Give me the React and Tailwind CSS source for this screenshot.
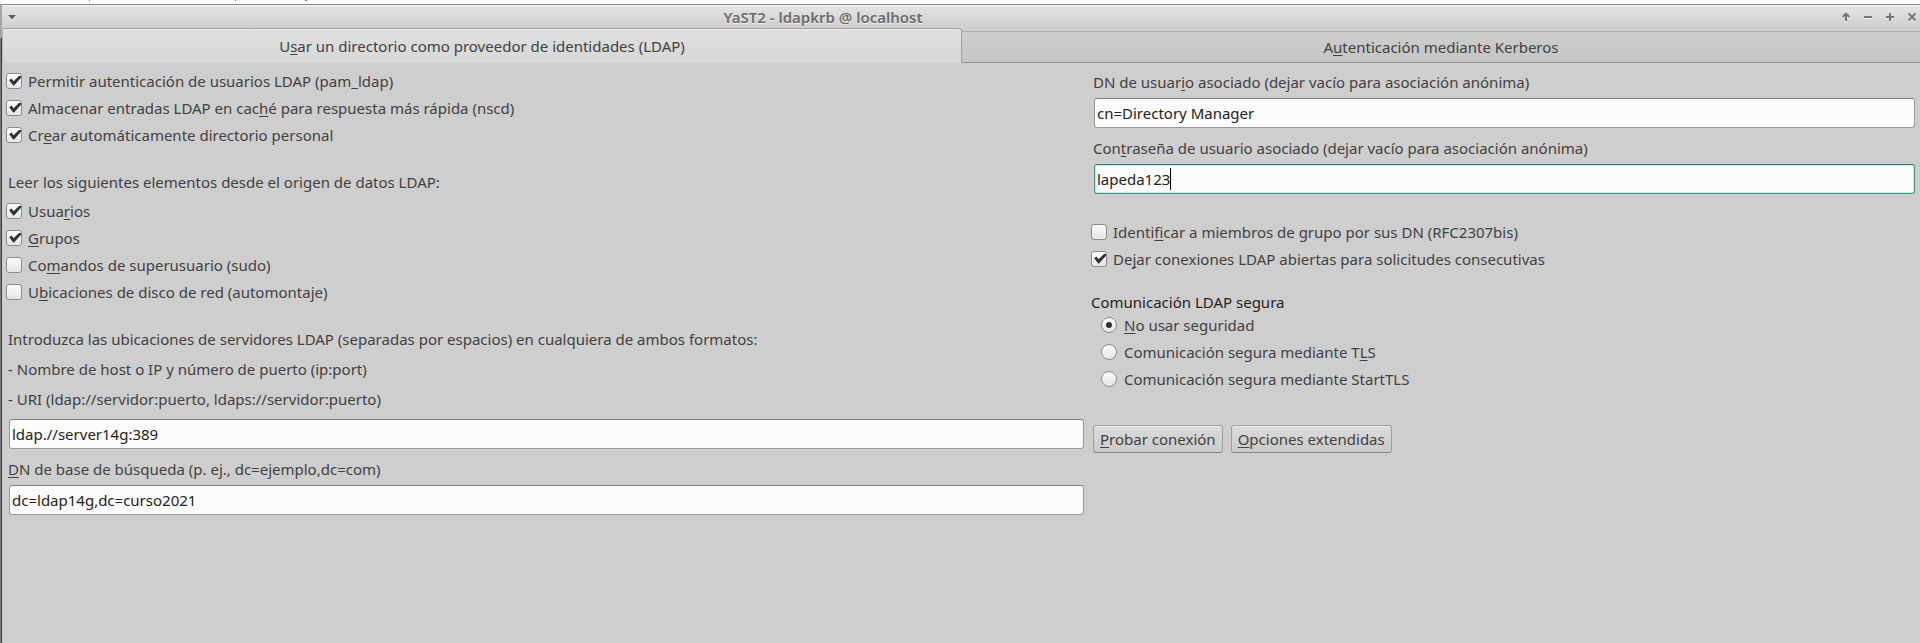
import { useState } from "react";

/* Label text with its keyboard accelerator: the letter after "&" is underlined. */
function Mnemonic({ text }) {
  const at = text.indexOf("&");
  if (at < 0) return <span>{text}</span>;
  return (
    <span>
      {text.slice(0, at)}
      <u className="underline decoration-1 underline-offset-2 [text-decoration-skip-ink:none]">{text[at + 1]}</u>
      {text.slice(at + 2)}
    </span>
  );
}

function Check({ text, checked = false }) {
  const [on, setOn] = useState(checked);
  return (
    <label className="flex h-[27px] items-center gap-[6px]">
      <span className="grid size-4 shrink-0">
        <input
          type="checkbox"
          checked={on}
          onChange={() => setOn(!on)}
          className="col-start-1 row-start-1 size-4 appearance-none rounded-[3px] border border-[#8d8d88] bg-linear-to-b from-[#fbfbfb] to-[#e6e6e4]"
        />
        {on && (
          <svg viewBox="0 0 16 16" className="pointer-events-none col-start-1 row-start-1 size-4" fill="#2b3336">
            <path d="M3.2 7.2 5.4 5.6 7.6 8.2 13 3 15 3 15 4.8 8 12.4 7.2 12.4Z" />
          </svg>
        )}
      </span>
      <Mnemonic text={text} />
    </label>
  );
}

function Radio({ text, checked, onChange }) {
  return (
    <label className="flex h-[27px] items-center gap-[7px]">
      <span className="grid size-4 shrink-0 place-items-center">
        <input
          type="radio"
          name="seguridad"
          checked={checked}
          onChange={onChange}
          className="col-start-1 row-start-1 size-4 appearance-none rounded-full border border-[#8d8d88] bg-linear-to-b from-[#fbfbfb] to-[#e6e6e4]"
        />
        {checked && <span className="pointer-events-none col-start-1 row-start-1 size-[6px] rounded-full bg-[#2b3336]" />}
      </span>
      <Mnemonic text={text} />
    </label>
  );
}

const fieldBox =
  "h-[30px] rounded-[3px] border border-[#9a9a9a] border-t-[#808080] bg-[#fcfcfc] px-[2px] text-[#232323] outline-none";

function Field({ id, text, value }) {
  return (
    <div className="flex flex-col">
      <label htmlFor={id} className="mb-px leading-[30px]">
        <Mnemonic text={text} />
      </label>
      <input id={id} defaultValue={value} className={fieldBox + " mx-px"} />
    </div>
  );
}

function WindowButton({ name, children }) {
  return (
    <button aria-label={name} className="size-4">
      <svg viewBox="0 0 16 16" className="size-4" fill="none" strokeWidth="2">
        <g stroke="#f4f4f4" transform="translate(0 1)">{children}</g>
        <g stroke="#757575">{children}</g>
      </svg>
    </button>
  );
}

const securityModes = ["&No usar seguridad", "Comunicación segura mediante T&LS", "Comunicación segura mediante StartTLS"];

const pushButton =
  "h-7 rounded-[3px] border border-[#a0a0a0] border-b-[#858585] bg-linear-to-b from-[#dcdcdc] to-[#cacaca] px-[6px] inset-shadow-[0_1px_0_#ececec]";

export default function App() {
  const [mode, setMode] = useState(0);
  return (
    <div className="flex min-h-screen flex-col bg-[#cecece] font-['Noto_Sans',sans-serif] text-[15px] leading-5 text-[#414141]">
      <div className="flex h-1 items-start bg-white pl-[89px]">
        <span className="h-px w-px bg-[#777777]" />
        <span className="ml-[145px] h-px w-px bg-[#777777]" />
        <span className="ml-[69px] h-px w-[2px] bg-[#777777]" />
      </div>
      <div className="flex grow">
        <div className="flex w-[2px] flex-col">
          <div className="h-[34px] bg-[#a9a49c]" />
          <div className="flex grow bg-[#3f3f3f]"><div className="w-px bg-[#777777]" /></div>
        </div>
        <div className="flex min-w-0 grow flex-col">
          <header className="flex h-6 items-center border-t border-[#858585] bg-linear-to-b from-[#e6e6e6] to-[#cecece] pl-[6px] inset-shadow-[0_1px_0_#f8f8f8]">
            <button aria-label="Menú de ventana" className="h-3 w-2">
              <svg viewBox="0 0 8 12" className="h-3 w-2">
                <path d="M0 5h8L4 10Z" fill="#f4f4f4" />
                <path d="M0 4h8L4 8.6Z" fill="#5c5c5c" />
              </svg>
            </button>
            <div className="grow-17" />
            <h1 className="font-semibold text-[#6c6c6c] [text-shadow:0_1px_0_#eeeeee]">YaST2 - ldapkrb @ localhost</h1>
            <div className="grow-22" />
            <div className="flex gap-[6px]">
              <WindowButton name="Enrollar"><path d="M8 12V5M4.7 8 8 4.7 11.3 8" /></WindowButton>
              <WindowButton name="Minimizar"><path d="M4 8h8" /></WindowButton>
              <WindowButton name="Maximizar"><path d="M4 8h8M8 4v8" /></WindowButton>
              <WindowButton name="Cerrar"><path d="M4.5 4.5l7 7M11.5 4.5l-7 7" /></WindowButton>
            </div>
          </header>

          <div role="tablist" className="grid h-[35px] grid-cols-[960fr_958fr] items-end">
            <button
              role="tab"
              aria-selected="true"
              className="h-full rounded-t-[3px] border border-b-0 border-[#a3a3a3] border-l-[#b8b8b8] bg-linear-to-b from-[#e0e0e0] to-[#d8d8d8] pb-px inset-shadow-[0_1px_0_#ececec]"
            >
              <Mnemonic text="U&sar un directorio como proveedor de identidades (LDAP)" />
            </button>
            <button
              role="tab"
              aria-selected="false"
              className="h-8 border-y border-t-[#adadad] border-b-[#949494] bg-linear-to-b from-[#cdcdcd] to-[#c6c6c6]"
            >
              <Mnemonic text="A&utenticación mediante Kerberos" />
            </button>
          </div>

          <main className="grid grid-cols-[1084fr_834fr] pt-1">
            <section className="flex flex-col pr-px pl-[6px]">
              <div className="-ml-[2px]">
                <Check text="Permitir autenticación de usuarios LDAP (pam_ldap)" checked />
                <Check text="Almacenar entradas LDAP en cac&hé para respuesta más rápida (nscd)" checked />
                <Check text="Cr&ear automáticamente directorio personal" checked />
              </div>
              <p className="mt-[19px] leading-[30px]">Leer los siguientes elementos desde el origen de datos LDAP:</p>
              <div className="-ml-[2px]">
                <Check text="Usua&rios" checked />
                <Check text="&Grupos" checked />
                <Check text="Co&mandos de superusuario (sudo)" />
                <Check text="U&bicaciones de disco de red (automontaje)" />
              </div>
              <label htmlFor="servidores" className="mt-[19px] mb-[5px] leading-[30px]">
                Introduzca las ubicaciones de servidores LDAP (separadas por espacios) en cualquiera de ambos formatos:
                <br />- Nombre de host o IP y número de puerto (ip:port)
                <br />- URI (ldap://servidor:puerto, ldaps://servidor:puerto)
              </label>
              <input id="servidores" defaultValue="ldap.//server14g:389" className={fieldBox + " mx-px mb-[5px]"} />
              <Field id="base" text="&DN de base de búsqueda (p. ej., dc=ejemplo,dc=com)" value="dc=ldap14g,dc=curso2021" />
            </section>

            <section className="flex flex-col pr-1 pl-[7px]">
              <Field id="dn" text="DN de usuar&io asociado (dejar vacío para asociación anónima)" value="cn=Directory Manager" />
              <label htmlFor="clave" className="mt-[5px] mb-px leading-[30px]">
                <Mnemonic text="Con&traseña de usuario asociado (dejar vacío para asociación anónima)" />
              </label>
              <div className="mx-px flex h-[30px] items-center rounded-[3px] border border-[#45968a] border-t-[#38776e] bg-[#fcfcfc] px-[2px] text-[#232323] inset-shadow-[0_0_0_1px_#c3e8e2]">
                <input id="clave" defaultValue="lapeda123" className="caret-transparent outline-none [field-sizing:content]" />
                <span className="h-[22px] w-px bg-black" />
              </div>

              <div className="mt-6 -ml-[2px]">
                <Check text="Identi&ficar a miembros de grupo por sus DN (RFC2307bis)" />
                <Check text="De&jar conexiones LDAP abiertas para solicitudes consecutivas" checked />
              </div>

              <fieldset className="mt-[21px] -ml-[2px]">
                <legend className="leading-[18px] text-[#232323]">Comunicación LDAP segura</legend>
                <div className="pl-[10px]">
                  {securityModes.map((text, i) => (
                    <Radio key={text} text={text} checked={mode === i} onChange={() => setMode(i)} />
                  ))}
                </div>
              </fieldset>

              <div className="mt-[33px] flex gap-2">
                <button className={pushButton}><Mnemonic text="&Probar conexión" /></button>
                <button className={pushButton}><Mnemonic text="&Opciones extendidas" /></button>
              </div>
            </section>
          </main>
        </div>
      </div>
    </div>
  );
}
